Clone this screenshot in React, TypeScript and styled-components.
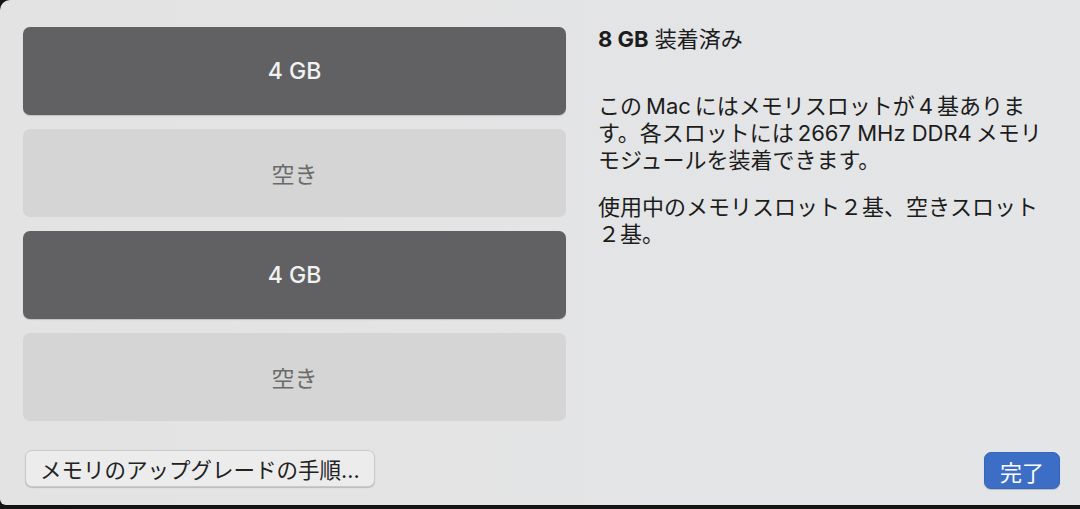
import styled, { createGlobalStyle } from 'styled-components';

const GlobalStyle = createGlobalStyle`
	html, body {
		margin: 0;
		padding: 0;
		background: #141414;
	}
	body {
		font-family: "Inter", "Noto Sans CJK JP", sans-serif;
		-webkit-font-smoothing: antialiased;
	}
`;

const Window = styled.div`
	width: 1080px;
	height: 505px;
	box-sizing: border-box;
	background: linear-gradient(90deg, #e3e3e3 0%, #e4e5e7 100%);
	border-radius: 10px 0 0 6px;
	padding: 27px 20px 0 23px;
	display: grid;
	grid-template-columns: 543px 1fr;
	grid-template-rows: auto auto;
	align-content: start;
	column-gap: 32px;
`;

const SlotList = styled.div`
	display: flex;
	flex-direction: column;
	gap: 14px;
`;

const Slot = styled.div<{ $filled: boolean }>`
	height: 88px;
	border-radius: 7px;
	display: flex;
	align-items: center;
	justify-content: center;
	background: ${p => (p.$filled ? '#616163' : '#d5d5d5')};
	color: ${p => (p.$filled ? '#f2f2f2' : '#6b6b6b')};
	font-size: 23px;
	font-weight: ${p => (p.$filled ? 500 : 400)};
	box-shadow: ${p => (p.$filled ? '0 1px 1px rgba(0,0,0,0.15)' : 'none')};
`;

const Info = styled.div`
	color: #1c1c1c;
`;

const Heading = styled.h2`
	margin: -1px 0 41px;
	font-size: 22px;
	line-height: 26px;
	font-weight: 400;

	b {
		font-weight: 700;
	}
`;

const Paragraph = styled.p`
	margin: 0 0 20px;
	font-size: 22px;
	line-height: 27px;
	max-width: 455px;
`;

// latin runs inside japanese text get a little air on each side
const Latin = styled.span`
	padding: 0 4px;
`;

const Footer = styled.div`
	grid-column: 1 / -1;
	display: flex;
	justify-content: space-between;
	align-items: flex-start;
	padding: 29px 0 0 2px;
`;

const PushButton = styled.button<{ $primary?: boolean }>`
	font-family: inherit;
	font-size: ${p => (p.$primary ? '22px' : '21.5px')};
	height: 37px;
	padding: 0 ${p => (p.$primary ? '15px' : '14px')};
	margin-top: ${p => (p.$primary ? '2px' : '0')};
	border-radius: 7px;
	border: 1px solid ${p => (p.$primary ? '#3566bb' : '#cacaca')};
	background: ${p => (p.$primary ? '#3c6ec6' : '#ececec')};
	color: ${p => (p.$primary ? '#ffffff' : '#222222')};
	box-shadow: 0 1px 1px rgba(0, 0, 0, 0.18);
	cursor: pointer;
`;

const slots = [
	{ filled: true, label: '4 GB' },
	{ filled: false, label: '空き' },
	{ filled: true, label: '4 GB' },
	{ filled: false, label: '空き' },
];

export default function App() {
	return (
		<>
			<GlobalStyle />
			<Window>
				<SlotList>
					{slots.map((s, i) => (
						<Slot key={i} $filled={s.filled}>{s.label}</Slot>
					))}
				</SlotList>
				<Info>
					<Heading><b>8 GB</b> 装着済み</Heading>
					<Paragraph>
						この<Latin>Mac</Latin>にはメモリスロットが<Latin>4</Latin>基あります。各スロットには<Latin>2667 MHz DDR4</Latin>メモリモジュールを装着できます。
					</Paragraph>
					<Paragraph>使用中のメモリスロット２基、空きスロット２基。</Paragraph>
				</Info>
				<Footer>
					<PushButton>メモリのアップグレードの手順...</PushButton>
					<PushButton $primary>完了</PushButton>
				</Footer>
			</Window>
		</>
	);
}
